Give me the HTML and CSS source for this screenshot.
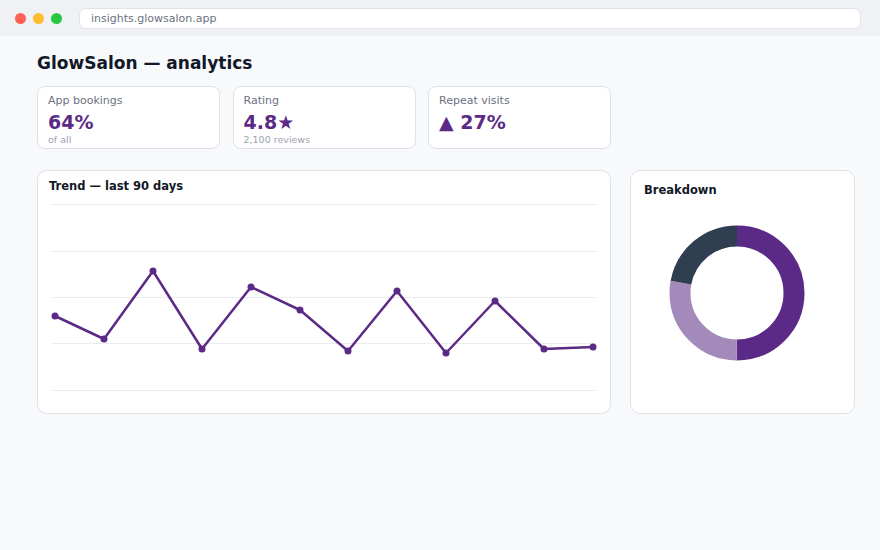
FILE: index.html
```html
<!DOCTYPE html>
<html lang="en">

<head>
    <meta charset="UTF-8">
    <meta name="viewport" content="width=device-width, initial-scale=1.0">
    <title>GlowSalon — analytics</title>
    <link rel="stylesheet" href="styles.css">
</head>

<body>
    <div class="chrome">
        <span class="dot red"></span>
        <span class="dot yellow"></span>
        <span class="dot green"></span>
        <div class="url">insights.glowsalon.app</div>
    </div>

    <main class="page">
        <h1 class="title">GlowSalon — analytics</h1>

        <div class="stats">
            <div class="stat">
                <div class="stat-label">App bookings</div>
                <div class="stat-value">64%</div>
                <div class="stat-sub">of all</div>
            </div>
            <div class="stat">
                <div class="stat-label">Rating</div>
                <div class="stat-value">4.8★</div>
                <div class="stat-sub">2,100 reviews</div>
            </div>
            <div class="stat">
                <div class="stat-label">Repeat visits</div>
                <div class="stat-value">▲ 27%</div>
            </div>
        </div>

        <div class="panels">
            <div class="panel trend">
                <div class="panel-title">Trend — last 90 days</div>
                <svg class="line-chart" width="552" height="210" viewBox="0 0 552 210">
                    <!-- grid -->
                    <g stroke="#e9ecf1" stroke-width="1">
                        <line x1="3" y1="11.5" x2="547" y2="11.5" />
                        <line x1="3" y1="58.5" x2="547" y2="58.5" />
                        <line x1="3" y1="104.5" x2="547" y2="104.5" />
                        <line x1="3" y1="150.5" x2="547" y2="150.5" />
                        <line x1="3" y1="197.5" x2="547" y2="197.5" />
                    </g>
                    <polyline fill="none" stroke="#5b2a86" stroke-width="2.5" stroke-linejoin="round"
                        points="6,123 55,146 104,78 153,156 202,94 251,117 299,158 348,98 397,160 446,108 495,156 544,154" />
                    <g fill="#5b2a86">
                        <circle cx="6" cy="123" r="3.5" />
                        <circle cx="55" cy="146" r="3.5" />
                        <circle cx="104" cy="78" r="3.5" />
                        <circle cx="153" cy="156" r="3.5" />
                        <circle cx="202" cy="94" r="3.5" />
                        <circle cx="251" cy="117" r="3.5" />
                        <circle cx="299" cy="158" r="3.5" />
                        <circle cx="348" cy="98" r="3.5" />
                        <circle cx="397" cy="160" r="3.5" />
                        <circle cx="446" cy="108" r="3.5" />
                        <circle cx="495" cy="156" r="3.5" />
                        <circle cx="544" cy="154" r="3.5" />
                    </g>
                </svg>
            </div>

            <div class="panel breakdown">
                <div class="panel-title">Breakdown</div>
                <!-- 50 / 28 / 22 split, starts at 12 o'clock -->
                <svg class="donut" width="186" height="176" viewBox="0 0 186 176">
                    <g transform="rotate(-90 93 88)" fill="none" stroke-width="21">
                        <circle cx="93" cy="88" r="57" stroke="#5b2a86" stroke-dasharray="179.07 358.14" />
                        <circle cx="93" cy="88" r="57" stroke="#a48aba" stroke-dasharray="99.5 358.14" stroke-dashoffset="-179.07" />
                        <circle cx="93" cy="88" r="57" stroke="#2f3e51" stroke-dasharray="79.57 358.14" stroke-dashoffset="-278.57" />
                    </g>
                </svg>
            </div>
        </div>
    </main>
</body>

</html>
```

FILE: styles.css
```css
* {
    margin: 0;
    padding: 0;
    box-sizing: border-box;
}

body {
    background-color: #f8f9fb;
    font-family: "DejaVu Sans", sans-serif;
    color: #111827;
}

.chrome {
    height: 36px;
    background-color: #f0f1f4;
    display: flex;
    align-items: center;
    padding-left: 15px;
    padding-right: 19px;
}

.dot {
    width: 11px;
    height: 11px;
    border-radius: 50%;
    margin-right: 7px;
}

.red {
    background-color: #ff5f57;
}

.yellow {
    background-color: #febc2e;
}

.green {
    background-color: #28c840;
}

.url {
    flex: 1;
    height: 21px;
    margin-left: 10px;
    background-color: #fff;
    border: 1px solid #e0e4ea;
    border-radius: 7px;
    font-size: 11px;
    line-height: 19px;
    color: #6b7280;
    padding-left: 11px;
}

.page {
    padding: 16px 25px 0 37px;
}

.title {
    font-size: 17px;
    line-height: 22px;
    font-weight: bold;
    color: #111827;
}

.stats {
    display: grid;
    grid-template-columns: repeat(3, 183px);
    gap: 12.5px;
    margin-top: 12px;
}

.stat {
    height: 63px;
    background-color: #fff;
    border: 1px solid #dde2ea;
    border-radius: 8px;
    padding: 7px 10px;
}

.stat-label {
    font-size: 11px;
    line-height: 13px;
    color: #6b7280;
}

.stat-value {
    font-size: 19px;
    line-height: 24px;
    font-weight: bold;
    color: #5b2a86;
    margin-top: 3px;
}

.stat-sub {
    font-size: 9.5px;
    line-height: 11px;
    color: #9ca3af;
}

.panels {
    display: grid;
    grid-template-columns: 574px 225px;
    gap: 19px;
    margin-top: 21px;
}

.panel {
    height: 244px;
    background-color: #fff;
    border: 1px solid #dde2ea;
    border-radius: 10px;
}

.panel-title {
    font-size: 11.5px;
    line-height: 14px;
    font-weight: bold;
    color: #111827;
}

.trend {
    padding: 8px 11px;
}

.line-chart {
    display: block;
}

.breakdown {
    padding: 12px 13px;
}

.donut {
    display: block;
    margin-top: 8px;
}
```
